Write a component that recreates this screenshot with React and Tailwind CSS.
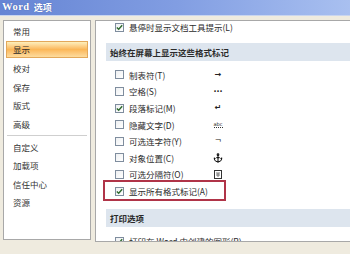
import React from "react";
import { Anchor } from "lucide-react";

const FONT = { fontFamily: '"Noto Sans CJK SC", "Noto Sans", sans-serif' };
const SYM = { fontFamily: '"DejaVu Sans", sans-serif' };

function Check({ checked }) {
  return (
    <span className="w-[9px] h-[9px] shrink-0 border border-[#7f8d9e] bg-gradient-to-br from-[#eef0f2] to-white flex items-center justify-center">
      {checked && (
        <svg width="7" height="7" viewBox="0 0 7 7">
          <path d="M0.8 3.4 L2.7 5.3 L6.2 1.2" fill="none" stroke="#2e6a2e" strokeWidth="1.4" />
        </svg>
      )}
    </span>
  );
}

function Row({ label, checked, symbol, h = "h-[16.6px]" }) {
  return (
    <div className={`${h} flex items-center`}>
      <span className="ml-[19px]">
        <Check checked={checked} />
      </span>
      <span className="ml-[5px] w-[84px] whitespace-nowrap text-[8.5px] leading-none text-[#2b2b2b]">{label}</span>
      <span className="w-[10px] flex items-center justify-center text-[9px] leading-none text-[#222]" style={SYM}>{symbol}</span>
    </div>
  );
}

const leftItems = ["常用", "显示", "校对", "保存", "版式", "高级"];
const leftItems2 = ["自定义", "加载项", "信任中心", "资源"];

export default function App() {
  return (
    <div className="w-[350px] h-[254px] overflow-hidden bg-[#efebdf] flex flex-col" style={FONT}>
      <div className="h-[16px] shrink-0 bg-gradient-to-r from-[#6685d4] via-[#819de2] to-[#a9c0f0] flex items-center pl-[2px] border-b border-[#c9d5ef]">
        <span className="text-[10.5px] font-bold text-white leading-none tracking-[0.5px]" style={{ fontFamily: '"Liberation Serif", serif', textShadow: "0 0 1px #3a55a0" }}>
          Word
        </span>
        <span className="ml-[4px] text-[9px] font-bold text-white leading-none" style={{ textShadow: "0 0 1px #3a55a0" }}>
          选项
        </span>
      </div>
      <div className="flex pt-[4px] pl-[3px]">
        <div className="w-[88px] h-[220px] shrink-0 border border-[#a8a8a8] bg-white pt-[0.7px] px-[2px]">
          {leftItems.map((t) =>
            t === "显示" ? (
              <div key={t} className="h-[16.6px] my-[1px] flex items-center pl-[6px] border border-[#e3a85a] bg-gradient-to-b from-[#fdefbc] via-[#fbb758] to-[#fddc9e] text-[8.5px] leading-none text-[#2b2b2b]">
                {t}
              </div>
            ) : (
              <div key={t} className="h-[18.6px] flex items-center pl-[7px] text-[8.5px] leading-none text-[#333]">
                {t}
              </div>
            )
          )}
          <div className="h-[4.4px] flex items-center px-[1px]">
            <div className="h-px w-full bg-[#cfcfcf]" />
          </div>
          {leftItems2.map((t) => (
            <div key={t} className="h-[18.6px] flex items-center pl-[7px] text-[8.5px] leading-none text-[#333]">
              {t}
            </div>
          ))}
        </div>
        <div className="ml-[4px] w-[260px] h-[222px] shrink-0 border border-r-0 border-[#a8a8a8] bg-white overflow-hidden">
          <Row label="悬停时显示文档工具提示(L)" checked h="h-[13px]" />
          <div className="mt-[9px] ml-[10px] h-[18px] bg-[#dde5ee] flex items-center pl-[4px] text-[8.5px] font-bold leading-none text-[#2b2b2b] whitespace-nowrap">
            始终在屏幕上显示这些格式标记
          </div>
          <div className="pt-[5.7px]">
            <Row label="制表符(T)" symbol={<span className="font-bold text-[8px]">→</span>} />
            <Row label="空格(S)" symbol={<span className="font-bold text-[8px]">···</span>} />
            <Row label="段落标记(M)" checked symbol={<span className="font-bold text-[8px]">↵</span>} />
            <Row
              label="隐藏文字(D)"
              symbol={<span className="text-[5px] border-b border-dotted border-[#333] leading-none">abc</span>}
            />
            <Row label="可选连字符(Y)" symbol={<span className="text-[8px]">¬</span>} />
            <Row label="对象位置(C)" symbol={<Anchor size={10} strokeWidth={2.6} color="#111" />} />
            <Row
              label="可选分隔符(O)"
              symbol={
                <svg width="8" height="9" viewBox="0 0 8 9">
                  <rect x="0.5" y="0.5" width="7" height="8" fill="none" stroke="#333" />
                  <path d="M2 3 H6 M2 5 H6 M4 3 V7" stroke="#555" strokeWidth="0.8" />
                </svg>
              }
            />
            <div className="relative">
              <Row label="显示所有格式标记(A)" checked />
              <div className="absolute left-[7px] -top-[3px] w-[123px] h-[21px] border-2 border-[#b03448] pointer-events-none" />
            </div>
          </div>
          <div className="mt-[9.5px] ml-[10px] h-[18px] bg-[#dde5ee] flex items-center pl-[4px] text-[8.5px] font-bold leading-none text-[#2b2b2b]">
            打印选项
          </div>
          <div className="pt-[6.5px]">
            <Row label="打印在 Word 中创建的图形(R)" checked />
          </div>
        </div>
      </div>
    </div>
  );
}
